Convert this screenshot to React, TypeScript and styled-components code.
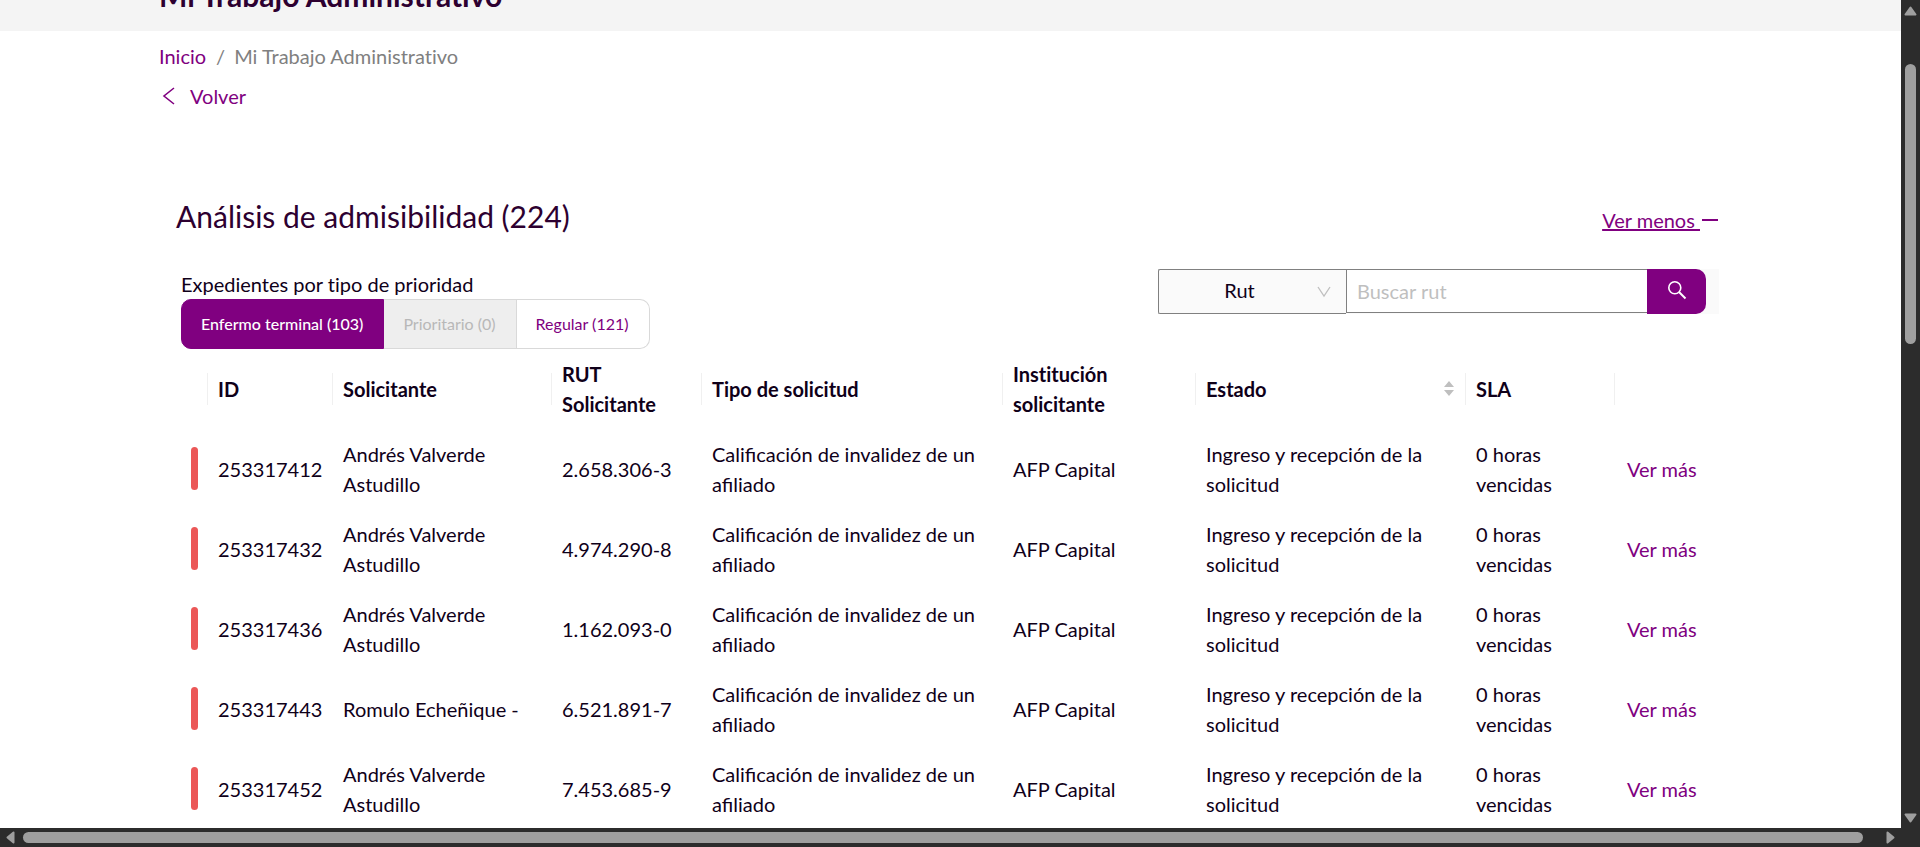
import React from "react";
import styled, { createGlobalStyle } from "styled-components";

const purple = "#800080";
const ink = "#0f0019";
const line = "#d9d9d9";

const GlobalStyle = createGlobalStyle`
  *, *::before, *::after { box-sizing: border-box; }
  body {
    margin: 0;
    background: #fff;
    color: ${ink};
    font: 20px/30px Lato, "Liberation Sans", sans-serif;
    font-variant-ligatures: no-common-ligatures;
  }
  button, input, select { font: inherit; color: inherit; margin: 0; font-variant-ligatures: inherit; }
  a { color: ${purple}; text-decoration: none; }
`;

const Frame = styled.div`
  display: grid;
  grid-template-columns: minmax(0, 1fr) 19px;
  grid-template-rows: minmax(0, 1fr) 19px;
  height: 100vh;
`;

const Viewport = styled.div`
  overflow: hidden;
`;

const Banner = styled.header`
  display: flex;
  align-items: flex-end;
  height: 31px;
  padding: 0 159px 16px;
  overflow: hidden;
  background: #f4f4f4;
`;

const PageTitle = styled.h1`
  margin: 0;
  color: #2d0030;
  font-size: 30px;
  line-height: 40px;
  font-weight: 700;
`;

const Main = styled.main`
  padding: 10px 159px 0;
`;

const Breadcrumb = styled.nav`
  ol {
    display: flex;
    margin: 0;
    padding: 0;
    list-style: none;
    color: #808080;
  }
  li + li::before {
    content: "/";
    margin: 0 9px 0 10px;
  }
`;

const BackLink = styled.a`
  display: flex;
  width: max-content;
  align-items: center;
  gap: 11px;
  margin-top: 10px;
`;

const Panel = styled.section`
  padding: 82px 23px 0 22px;
`;

const PanelHead = styled.div`
  display: flex;
  justify-content: space-between;
  align-items: center;
  margin-left: -5px;
  height: 46px;
`;

const PanelTitle = styled.h2`
  margin: 0;
  color: #2d0030;
  font-size: 30px;
  line-height: 46px;
  font-weight: 400;
`;

const Toggle = styled.a`
  display: flex;
  align-items: center;
  padding-top: 8px;
  span {
    white-space: pre;
    text-decoration: underline;
  }
`;

const Filters = styled.div`
  display: flex;
  justify-content: space-between;
  align-items: flex-start;
  padding-top: 30px;
`;

const Priority = styled.fieldset`
  margin: 0;
  padding: 0;
  border: 0;
  legend { padding: 0; }
`;

const Segments = styled.div`
  display: flex;
`;

const Segment = styled.button<{ $active?: boolean }>`
  height: 50px;
  padding: 0 20px 0 19px;
  border: 1px solid ${(p) => (p.$active ? purple : line)};
  border-left-width: ${(p) => (p.$active ? "1px" : "0")};
  background: ${(p) => (p.$active ? purple : "#fff")};
  color: ${(p) => (p.$active ? "#fff" : purple)};
  font-size: 16px;
  line-height: 24px;
  font-weight: ${(p) => (p.$active ? 500 : 400)};
  &:first-child { border-radius: 10px 0 0 10px; }
  &:last-child { border-radius: 0 10px 10px 0; }
  &:disabled { background: #eee; color: #b8b8b8; }
`;

const Search = styled.form`
  display: grid;
  grid-template-columns: 188px 301px 59px;
  padding-right: 13px;
  background: #fafafa;
`;

const SelectBox = styled.div`
  position: relative;
  height: 45px;
  svg {
    position: absolute;
    right: 15px;
    top: 17px;
    pointer-events: none;
  }
`;

const Select = styled.select`
  appearance: none;
  width: 100%;
  height: 100%;
  padding: 0 34px 3px 8px;
  border: 1px solid #808080;
  border-right: 0;
  border-radius: 2px 0 0 2px;
  background: #fafafa;
  text-align: center;
  text-align-last: center;
`;

const SearchInput = styled.input`
  width: 100%;
  height: 44px;
  padding: 0 10px;
  border: 1px solid #808080;
  border-right: 0;
  border-radius: 0;
  background: #fff;
  &::placeholder { color: #bfbfbf; opacity: 1; }
`;

const SearchButton = styled.button`
  display: grid;
  place-items: center;
  height: 45px;
  padding: 0 0 4px;
  border: 0;
  border-radius: 0 10px 10px 0;
  background: ${purple};
  color: #fff;
`;

const TableWrap = styled.div`
  padding-right: 13px;
`;

const Table = styled.table`
  width: 100%;
  table-layout: fixed;
  border-collapse: separate;
  border-spacing: 0;
`;

const Col = styled.col<{ $w: number }>`
  width: ${(p) => p.$w}px;
`;

const HeadCell = styled.th`
  position: relative;
  height: 80px;
  padding: 10px;
  text-align: left;
  font-weight: 700;
  &:not(:last-child)::after {
    content: "";
    position: absolute;
    top: 50%;
    right: 0;
    width: 1px;
    height: 32px;
    margin-top: -16px;
    background: #f0f0f0;
  }
`;

const SortLabel = styled.div`
  display: flex;
  justify-content: space-between;
  align-items: center;
  padding-right: 1px;
`;

const Cell = styled.td`
  height: 80px;
  padding: 10px;
  vertical-align: middle;
  font-variant-ligatures: common-ligatures;
`;

const IdCell = styled(Cell)`
  padding-right: 0;
`;

const ActionCell = styled(Cell)`
  padding: 10px 0 10px 12px;
  white-space: nowrap;
`;

const StatusBar = styled.div`
  width: 7px;
  height: 43px;
  margin-bottom: 1px;
  border-radius: 4px;
  background: #eb5757;
`;

const Track = styled.div<{ $vertical?: boolean }>`
  display: flex;
  flex-direction: ${(p) => (p.$vertical ? "column" : "row")};
  align-items: center;
  justify-content: space-between;
  gap: 8px;
  padding: ${(p) => (p.$vertical ? "6px 0 5px" : "0 6px")};
  background: #2c2c2c;
`;

const Rail = styled.div<{ $vertical?: boolean }>`
  flex: 1;
  padding: ${(p) => (p.$vertical ? "40px 0 0" : "0 15px 0 0")};
`;

const Thumb = styled.div<{ $vertical?: boolean }>`
  width: ${(p) => (p.$vertical ? "11px" : "100%")};
  height: ${(p) => (p.$vertical ? "280px" : "11px")};
  border-radius: 6px;
  background: #9f9f9f;
`;

const Corner = styled.div`
  background: #2c2c2c;
`;

const arrows = {
  up: { w: 13, h: 10, d: "M6.5 1.5 11.5 8.5H1.5Z" },
  down: { w: 13, h: 10, d: "M1.5 1.5H11.5L6.5 8.5Z" },
  left: { w: 9, h: 13, d: "M1.5 6.5 7.5 1.5V11.5Z" },
  right: { w: 9, h: 13, d: "M1.5 1.5 7.5 6.5 1.5 11.5Z" },
};

const Arrow = ({ dir }: { dir: keyof typeof arrows }) => {
  const a = arrows[dir];
  return (
    <svg width={a.w} height={a.h} viewBox={`0 0 ${a.w} ${a.h}`} aria-hidden="true">
      <path d={a.d} fill="#9f9f9f" stroke="#9f9f9f" strokeWidth="2" strokeLinejoin="round" />
    </svg>
  );
};

const solicitudes = [
  { id: "253317412", name: "Andrés Valverde Astudillo", rut: "2.658.306-3" },
  { id: "253317432", name: "Andrés Valverde Astudillo", rut: "4.974.290-8" },
  { id: "253317436", name: "Andrés Valverde Astudillo", rut: "1.162.093-0" },
  { id: "253317443", name: "Romulo Echeñique -", rut: "6.521.891-7" },
  { id: "253317452", name: "Andrés Valverde Astudillo", rut: "7.453.685-9" },
];

const columns = [27, 125, 219, 150, 301, 193, 270, 149, 91];

export default function App() {
  return (
    <Frame>
      <GlobalStyle />
      <Viewport>
        <Banner>
          <PageTitle>Mi Trabajo Administrativo</PageTitle>
        </Banner>
        <Main>
          <Breadcrumb aria-label="Ruta">
            <ol>
              <li><a href="#inicio">Inicio</a></li>
              <li>Mi Trabajo Administrativo</li>
            </ol>
          </Breadcrumb>
          <BackLink href="#volver">
            <svg width="20" height="20" viewBox="0 0 20 20" fill="none" aria-hidden="true">
              <path d="M15 2 5 10 15 18" stroke={purple} strokeWidth="1.6" />
            </svg>
            Volver
          </BackLink>

          <Panel>
            <PanelHead>
              <PanelTitle>Análisis de admisibilidad (224)</PanelTitle>
              <Toggle href="#ver-menos">
                <span>Ver menos </span>
                <svg width="19" height="20" viewBox="0 0 19 20" aria-hidden="true">
                  <path d="M2 9h16v2H2z" fill={purple} />
                </svg>
              </Toggle>
            </PanelHead>

            <Filters>
              <Priority>
                <legend>Expedientes por tipo de prioridad</legend>
                <Segments>
                  <Segment type="button" $active aria-pressed="true">Enfermo terminal (103)</Segment>
                  <Segment type="button" disabled>Prioritario (0)</Segment>
                  <Segment type="button">Regular (121)</Segment>
                </Segments>
              </Priority>
              <Search onSubmit={(e) => e.preventDefault()}>
                <SelectBox>
                  <Select aria-label="Buscar por" defaultValue="rut">
                    <option value="rut">Rut</option>
                  </Select>
                  <svg width="14" height="12" viewBox="0 0 14 12" fill="none" aria-hidden="true">
                    <path d="M1 1 7 10 13 1" stroke="#bfbfbf" strokeWidth="1.3" />
                  </svg>
                </SelectBox>
                <SearchInput type="text" placeholder="Buscar rut" aria-label="Buscar rut" />
                <SearchButton type="submit" aria-label="Buscar">
                  <svg width="20" height="20" viewBox="0 0 20 20" fill="none" aria-hidden="true">
                    <circle cx="7.8" cy="7.8" r="6" stroke="currentColor" strokeWidth="1.6" />
                    <path d="M12 12 18.5 18.5" stroke="currentColor" strokeWidth="1.9" />
                  </svg>
                </SearchButton>
              </Search>
            </Filters>

            <TableWrap>
              <Table>
                <colgroup>
                  {columns.map((w, i) => <Col key={i} $w={w} />)}
                </colgroup>
                <thead>
                  <tr>
                    <HeadCell aria-label="Prioridad" />
                    <HeadCell>ID</HeadCell>
                    <HeadCell>Solicitante</HeadCell>
                    <HeadCell>RUT Solicitante</HeadCell>
                    <HeadCell>Tipo de solicitud</HeadCell>
                    <HeadCell>Institución solicitante</HeadCell>
                    <HeadCell>
                      <SortLabel>
                        Estado
                        <svg width="12" height="18" viewBox="0 0 12 18" aria-hidden="true">
                          <path d="M6 1 11 7H1zM6 16 1 10h10z" fill="#bfbfbf" />
                        </svg>
                      </SortLabel>
                    </HeadCell>
                    <HeadCell>SLA</HeadCell>
                    <HeadCell aria-label="Acciones" />
                  </tr>
                </thead>
                <tbody>
                  {solicitudes.map((s) => (
                    <tr key={s.id}>
                      <Cell><StatusBar /></Cell>
                      <IdCell>{s.id}</IdCell>
                      <Cell>{s.name}</Cell>
                      <Cell>{s.rut}</Cell>
                      <Cell>Calificación de invalidez de un afiliado</Cell>
                      <Cell>AFP Capital</Cell>
                      <Cell>Ingreso y recepción de la solicitud</Cell>
                      <Cell>0 horas vencidas</Cell>
                      <ActionCell><a href={`#${s.id}`}>Ver más</a></ActionCell>
                    </tr>
                  ))}
                </tbody>
              </Table>
            </TableWrap>
          </Panel>
        </Main>
      </Viewport>
      <Track $vertical aria-hidden="true">
        <Arrow dir="up" />
        <Rail $vertical><Thumb $vertical /></Rail>
        <Arrow dir="down" />
      </Track>
      <Track aria-hidden="true">
        <Arrow dir="left" />
        <Rail><Thumb /></Rail>
        <Arrow dir="right" />
      </Track>
      <Corner />
    </Frame>
  );
}
